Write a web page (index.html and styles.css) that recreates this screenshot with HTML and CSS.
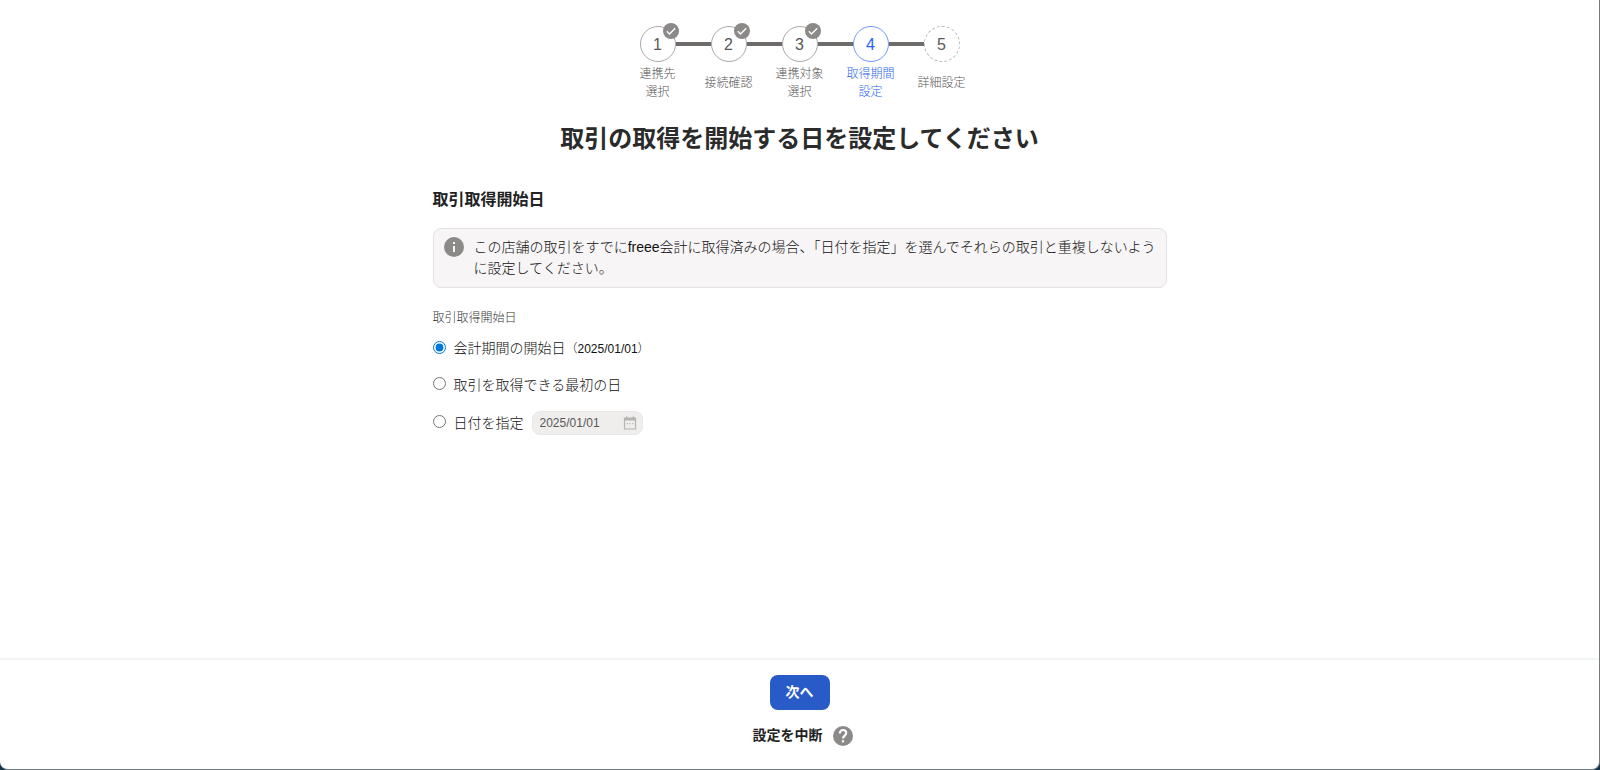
FILE: index.html
```html
<!DOCTYPE html>
<html lang="ja">
<head>
<meta charset="utf-8">
<title>取引取得開始日の設定</title>
<link rel="stylesheet" href="styles.css">
</head>
<body>
<div class="page">
  <main class="main">
    <ol class="steps">
      <li class="step done">
        <span class="circle">1<svg class="check" viewBox="0 0 16 16" aria-hidden="true"><circle cx="8" cy="8" r="8"/><path d="M3.8 8.3l2.7 2.7 5.7-5.8"/></svg></span>
        <span class="step-label">連携先<br>選択</span>
      </li>
      <li class="step done">
        <span class="circle">2<svg class="check" viewBox="0 0 16 16" aria-hidden="true"><circle cx="8" cy="8" r="8"/><path d="M3.8 8.3l2.7 2.7 5.7-5.8"/></svg></span>
        <span class="step-label">接続確認</span>
      </li>
      <li class="step done">
        <span class="circle">3<svg class="check" viewBox="0 0 16 16" aria-hidden="true"><circle cx="8" cy="8" r="8"/><path d="M3.8 8.3l2.7 2.7 5.7-5.8"/></svg></span>
        <span class="step-label">連携対象<br>選択</span>
      </li>
      <li class="step current" aria-current="step">
        <span class="circle">4</span>
        <span class="step-label">取得期間<br>設定</span>
      </li>
      <li class="step next">
        <span class="circle">5</span>
        <span class="step-label">詳細設定</span>
      </li>
    </ol>

    <h1>取引の取得を開始する日を設定してください</h1>

    <form class="content" id="period" action="" method="post">
      <h2>取引取得開始日</h2>
      <div class="info">
        <svg class="icon" viewBox="0 0 20 20" aria-hidden="true"><circle cx="10" cy="10" r="10" fill="#8c8989"/><path d="M9 5h2v2H9zM9 9h2v6H9z" fill="#f7f5f6"/></svg>
        <p>この店舗の取引をすでにfreee会計に取得済みの場合、「日付を指定」を選んでそれらの取引と重複しないように設定してください。</p>
      </div>
      <fieldset>
        <legend>取引取得開始日</legend>
        <div class="choice">
          <input type="radio" name="start" id="start-term" value="term" checked>
          <label for="start-term">会計期間の開始日<small>（2025/01/01）</small></label>
        </div>
        <div class="choice">
          <input type="radio" name="start" id="start-first" value="first">
          <label for="start-first">取引を取得できる最初の日</label>
        </div>
        <div class="choice choice-date">
          <input type="radio" name="start" id="start-date" value="date">
          <label for="start-date">日付を指定</label>
          <span class="date">
            <input type="text" name="date" value="2025/01/01" aria-label="日付" disabled>
            <svg viewBox="0 0 14 14" aria-hidden="true"><path d="M1.5 2.2h11v10.8h-11z" fill="none" stroke="#b5b2b0" stroke-width="1.2"/><path d="M1 2h12v2.6H1zM3 .4h1.4v2H3zM9.6.4H11v2H9.6zM3.8 7h1.2v1.2H3.8zM6.4 7h1.2v1.2H6.4zM9 7h1.2v1.2H9z" fill="#b5b2b0"/></svg>
          </span>
        </div>
      </fieldset>
    </form>
  </main>

  <footer class="footer">
    <button type="submit" form="period" class="primary">次へ</button>
    <div class="suspend">
      <button type="button" class="text-button">設定を中断</button>
      <button type="button" class="help" aria-label="ヘルプ">
        <svg class="icon" viewBox="0 0 20 20" aria-hidden="true"><circle cx="10" cy="10" r="10" fill="#8c8989"/><path d="M6.8 7.4C6.8 5.2 8.2 4 10 4s3.2 1.3 3.2 3.1c0 2.4-3.2 2.7-3.2 5.5" fill="none" stroke="#fff" stroke-width="2.1"/><path d="M8.9 14.2h2.2v2.2H8.9z" fill="#fff"/></svg>
      </button>
    </div>
  </footer>
</div>
</body>
</html>
```
FILE: styles.css
```css
* {
  box-sizing: border-box;
}
body {
  margin: 0;
  background: #12344a;
  color: #111;
  font-family: "Liberation Sans", "Noto Sans CJK JP", sans-serif;
  font-size: 14px;
  font-weight: 300;
  line-height: 21px;
}
.page {
  display: flex;
  flex-direction: column;
  min-height: 100vh;
  background: #fff;
  border: solid #707b82;
  border-width: 0 1px 1px 0;
  border-radius: 0 0 8px 8px;
}
.main {
  flex: 1;
  padding: 26px 16px 24px;
}

/* steps */
.steps {
  display: flex;
  justify-content: center;
  margin: 0 0 20px;
  padding: 0;
  list-style: none;
}
.step {
  display: flex;
  flex-direction: column;
  align-items: center;
  position: relative;
  width: 71px;
  color: #595757;
}
.step + .step::before {
  content: "";
  position: absolute;
  top: 16px;
  right: 53px;
  width: 35px;
  height: 4px;
  background: #6e6b6b;
}
.circle {
  display: flex;
  align-items: center;
  justify-content: center;
  position: relative;
  width: 36px;
  height: 36px;
  border: 1px solid #aaa7a7;
  border-radius: 50%;
  font-size: 16px;
}
.check {
  position: absolute;
  top: -4px;
  right: -4px;
  width: 16px;
  height: 16px;
  fill: #8c8989;
}
.check path {
  fill: none;
  stroke: #fff;
  stroke-width: 1.3;
}
.step-label {
  display: flex;
  align-items: center;
  height: 36px;
  margin-top: 3px;
  font-size: 12px;
  line-height: 18px;
  text-align: center;
}
.current {
  color: #2864f0;
}
.current .circle {
  border-color: #6f96f5;
}
.next .circle {
  border: 1px dashed #bbb8b8;
}

h1 {
  margin: 0 0 31px;
  color: #2b2b2b;
  font-size: 24px;
  line-height: 36px;
  text-align: center;
}
.content {
  max-width: 734px;
  margin: 0 auto;
}
h2 {
  margin: 0 0 16px;
  color: #222;
  font-size: 16px;
  line-height: 24px;
}
.info {
  display: flex;
  gap: 10px;
  padding: 8px 4px 8px 10px;
  background: #f7f5f6;
  border: 1px solid #e4e1e1;
  border-radius: 8px;
}
.info p {
  margin: 0;
}
.icon {
  display: block;
  flex: none;
  width: 20px;
  height: 20px;
}

/* start date */
fieldset {
  margin: 21px 0 0;
  padding: 0;
  border: 0;
}
legend {
  margin-bottom: 10px;
  padding: 0;
  color: #323232;
  font-size: 12px;
  line-height: 18px;
}
.choice {
  display: flex;
  align-items: center;
  gap: 8px;
  height: 24px;
  margin-bottom: 12px;
}
.choice input[type="radio"] {
  width: 13px;
  height: 13px;
  margin: 0 0 3px;
  accent-color: #0078d7;
}
.choice small {
  font-size: 12px;
}
.choice-date {
  margin-top: 14px;
}
.date {
  display: flex;
  align-items: center;
  width: 111px;
  height: 24px;
  padding: 0 5px 0 7px;
  background: #efeeed;
  border: 1px solid #e9e7e7;
  border-radius: 8px;
}
.date input {
  flex: 1;
  min-width: 0;
  padding: 0;
  border: 0;
  background: none;
  color: #595757;
  font: inherit;
  font-size: 12px;
}
.date svg {
  width: 14px;
  height: 14px;
}

/* footer */
.footer {
  display: flex;
  flex-direction: column;
  align-items: center;
  padding: 15px 16px 23px;
  border-top: 2px solid #f2f4f4;
}
button {
  padding: 0;
  border: 0;
  background: none;
  color: #222;
  font: inherit;
  cursor: pointer;
}
.primary {
  height: 35px;
  padding: 0 16px;
  border-radius: 8px;
  background: #285ac8;
  color: #fff;
  font-weight: bold;
}
.suspend {
  display: flex;
  align-items: center;
  gap: 10px;
  margin-top: 15px;
  padding-left: 6px;
}
.text-button {
  font-weight: bold;
}
```
